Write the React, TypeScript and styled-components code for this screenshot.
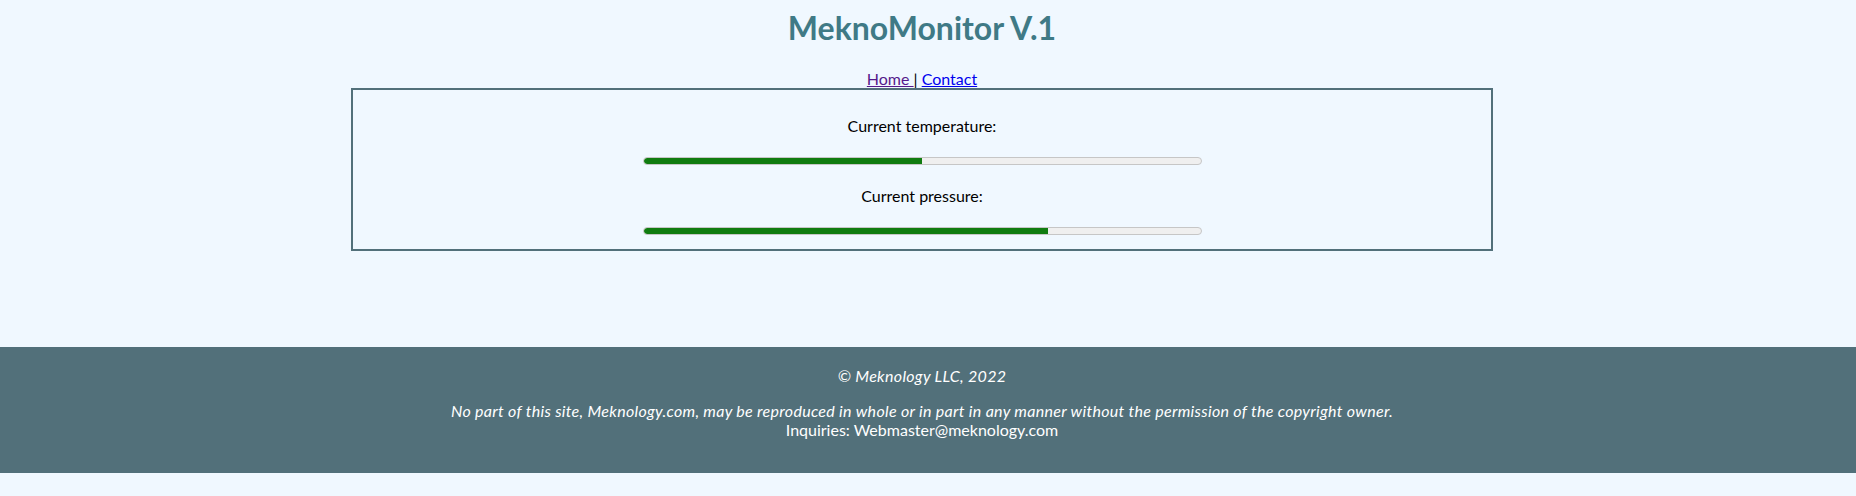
import React from "react";
import styled, { createGlobalStyle } from "styled-components";

const GlobalStyle = createGlobalStyle`
  html, body {
    margin: 0;
    padding: 0;
    background: #f0f8ff;
  }
  body {
    font-family: Lato, "Noto Sans", sans-serif;
    font-size: 16px;
    color: #000;
  }
`;

const Page = styled.div`
  display: flex;
  flex-direction: column;
`;

const Main = styled.main`
  padding-right: 12px;
  text-align: center;
`;

const Title = styled.h1`
  margin: 8px 0 21.6px;
  font-size: 32px;
  font-weight: 700;
  line-height: normal;
  color: #3f7a86;
`;

const Nav = styled.nav`
  line-height: normal;
`;

const NavLink = styled.a<{ $visited?: boolean }>`
  color: ${(p) => (p.$visited ? "#551a8b" : "#0000ee")};
  text-decoration: underline;
`;

const Panel = styled.section`
  box-sizing: border-box;
  width: 1142px;
  margin: 0 auto;
  padding: 10px 0 9px;
  border: 2px solid #52707a;
`;

const Label = styled.p`
  margin: 16px 0;
  line-height: normal;
`;

const BarRow = styled.div`
  height: 19.2px;
  padding-top: 6.5px;
  box-sizing: border-box;
`;

const Track = styled.div`
  box-sizing: border-box;
  width: 559px;
  height: 8px;
  margin: 0 auto;
  border: 1px solid #c6c6c6;
  border-radius: 4px;
  background: #efefef;
  overflow: hidden;
  display: flex;
`;

const Fill = styled.div`
  height: 100%;
  background: #107c10;
  border-radius: 3px 0 0 3px;
`;

const Footer = styled.footer`
  margin-top: 96px;
  padding: 3px 12px 18px 0;
  background: #52707a;
  color: #ffffff;
  text-align: center;
`;

const FooterText = styled.p<{ $italic?: boolean }>`
  margin: 16px 0;
  line-height: normal;
  font-style: ${(p) => (p.$italic ? "italic" : "normal")};
  letter-spacing: ${(p) => (p.$italic ? "0.3px" : "normal")};
`;

const Plain = styled.span`
  font-style: normal;
  letter-spacing: normal;
`;

type Reading = { label: string; value: number };

const readings: Reading[] = [
  { label: "Current temperature:", value: 50 },
  { label: "Current pressure:", value: 72.6 },
];

export default function App() {
  return (
    <Page>
      <GlobalStyle />
      <Main>
        <Title>MeknoMonitor V.1</Title>
        <Nav>
          <NavLink $visited href="#">Home </NavLink>| <NavLink href="#">Contact</NavLink>
        </Nav>
        <Panel>
          {readings.map((r) => (
            <React.Fragment key={r.label}>
              <Label>{r.label}</Label>
              <BarRow>
                <Track role="progressbar" aria-valuenow={r.value} aria-valuemin={0} aria-valuemax={100}>
                  <Fill style={{ width: `${r.value}%` }} />
                </Track>
              </BarRow>
            </React.Fragment>
          ))}
        </Panel>
      </Main>
      <Footer>
        <FooterText $italic>© Meknology LLC, 2022</FooterText>
        <FooterText $italic>
          No part of this site, Meknology.com, may be reproduced in whole or in part in any manner without the permission of the copyright owner.
          <br />
          <Plain>Inquiries: Webmaster@meknology.com</Plain>
        </FooterText>
      </Footer>
    </Page>
  );
}
